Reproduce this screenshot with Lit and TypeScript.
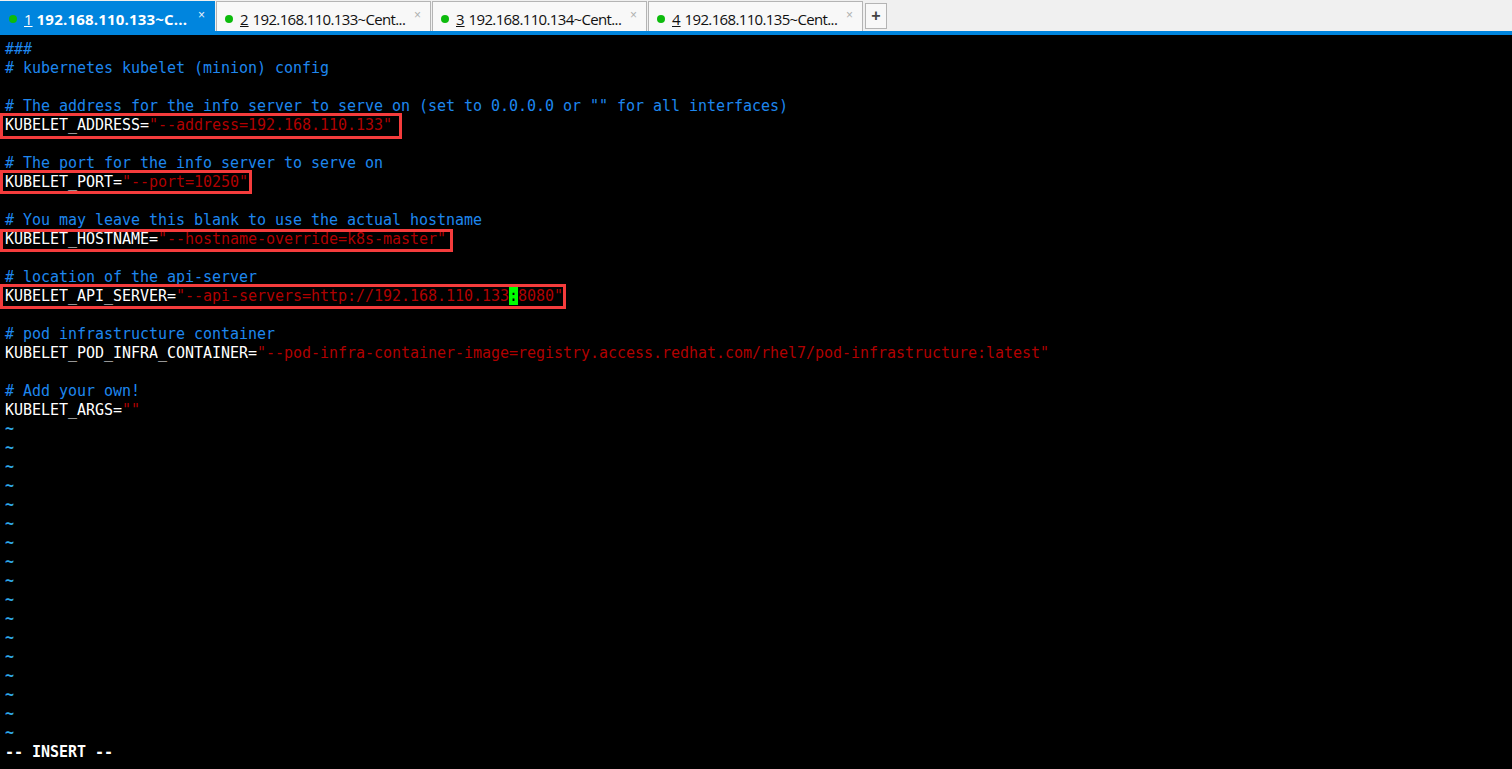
import { LitElement, html, css } from "lit";
import { customElement } from "lit/decorators.js";

type Box = { top: number; height: number; width: number };
type Line = { c?: string; k?: string; v?: string; box?: Box; cursor?: boolean };

const lines: Line[] = [
  { c: "###" },
  { c: "# kubernetes kubelet (minion) config" },
  {},
  { c: '# The address for the info server to serve on (set to 0.0.0.0 or "" for all interfaces)' },
  { k: "KUBELET_ADDRESS=", v: '"--address=192.168.110.133"', box: { top: -3, height: 26, width: 402 } },
  {},
  { c: "# The port for the info server to serve on" },
  { k: "KUBELET_PORT=", v: '"--port=10250"', box: { top: -3, height: 24, width: 252 } },
  {},
  { c: "# You may leave this blank to use the actual hostname" },
  { k: "KUBELET_HOSTNAME=", v: '"--hostname-override=k8s-master"', box: { top: -1, height: 23, width: 453 } },
  {},
  { c: "# location of the api-server" },
  { k: "KUBELET_API_SERVER=", v: '"--api-servers=http://192.168.110.133', box: { top: -3, height: 25, width: 566 }, cursor: true },
  {},
  { c: "# pod infrastructure container" },
  { k: "KUBELET_POD_INFRA_CONTAINER=", v: '"--pod-infra-container-image=registry.access.redhat.com/rhel7/pod-infrastructure:latest"' },
  {},
  { c: "# Add your own!" },
  { k: "KUBELET_ARGS=", v: '""' },
];

const tabs = [
  { n: "1", t: "192.168.110.133~C...", active: true },
  { n: "2", t: "192.168.110.133~Cent..." },
  { n: "3", t: "192.168.110.134~Cent..." },
  { n: "4", t: "192.168.110.135~Cent..." },
];

@customElement("app-root")
export class AppRoot extends LitElement {
  static styles = css`
    :host { display: block; width: 1512px; height: 769px; overflow: hidden; background: #000; }
    .bar { display: flex; height: 31px; background: #f0f0f0; padding-top: 1px; box-sizing: border-box; gap: 1px; }
    .tab {
      width: 215px; height: 30px; box-sizing: border-box; flex: none;
      display: flex; align-items: center; padding: 4px 0 0 8px;
      background: #f8f8f8; border: 1px solid #b4b4b4; border-bottom: 0;
      font: 15px/18px "Open Sans", "Noto Sans", sans-serif; color: #111; white-space: nowrap;
    }
    .tab.active { background: #0085de; border-color: #0085de; color: #fff; font-weight: 700; }
    .dot { width: 8px; height: 8px; border-radius: 50%; background: #0dbb0d; flex: none; margin-right: 7px; }
    .num { text-decoration: underline; margin-right: 4px; font-weight: 400; }
    .title { flex: 1; letter-spacing: -0.65px; }
    .active .title { letter-spacing: 0.2px; }
    .x { width: 16px; flex: none; margin: -7px 0 0 0; font: 12px/12px "Liberation Sans", sans-serif; color: #b0b0b0; }
    .active .x { color: #e8f2fb; }
    .plus {
      width: 22px; height: 26px; box-sizing: border-box; margin: 2px 0 0 1px; flex: none;
      border: 1px solid #b4b4b4; background: #f8f8f8; color: #444;
      display: flex; align-items: center; justify-content: center;
      font: bold 16px/16px "Liberation Sans", sans-serif;
    }
    .rule { height: 4px; background: #0085de; }
    .term {
      padding: 5px 0 0 5px; color: #fff; background: #000;
      font: 15px/19px "DejaVu Sans Mono", monospace; letter-spacing: -0.03px;
    }
    .line { height: 19px; white-space: pre; position: relative; }
    .cm { color: #1e87ee; }
    .val { color: #b00000; }
    .tilde { color: #2fa8e6; font-weight: 700; }
    .box { position: absolute; left: -5px; box-sizing: border-box; border: 3px solid #f53c3c; }
    .cur { background: #00ff00; color: #000; }
    .mode { font-weight: 700; }
  `;

  private renderLine(l: Line) {
    if (l.c) return html`<div class="line cm">${l.c}</div>`;
    if (!l.k) return html`<div class="line"> </div>`;
    return html`<div class="line">${l.k}<span class="val">${l.v}</span>${l.cursor
      ? html`<span class="cur">:</span><span class="val">8080"</span>`
      : ""}${l.box
      ? html`<span class="box" style="top:${l.box.top}px;height:${l.box.height}px;width:${l.box.width}px"></span>`
      : ""}</div>`;
  }

  render() {
    return html`
      <div class="bar">
        ${tabs.map(
          (t) => html`<div class="tab ${t.active ? "active" : ""}">
            <span class="dot"></span><span class="num">${t.n}</span><span class="title">${t.t}</span><span class="x">×</span>
          </div>`
        )}
        <div class="plus">+</div>
      </div>
      <div class="rule"></div>
      <div class="term">
        ${lines.map((l) => this.renderLine(l))}
        ${Array.from({ length: 17 }, () => html`<div class="line tilde">~</div>`)}
        <div class="line mode">-- INSERT --</div>
      </div>
    `;
  }
}
